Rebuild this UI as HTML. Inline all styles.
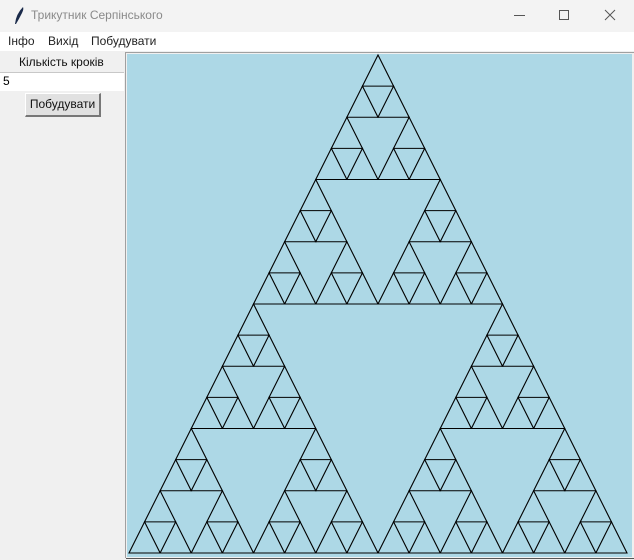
<!DOCTYPE html>
<html><head><meta charset="utf-8"><style>
body{margin:0;width:634px;height:560px;overflow:hidden;background:#f0f0f0;font-family:"Segoe UI","Liberation Sans",sans-serif;position:relative}
.t{position:absolute;left:0;top:0;width:634px;height:32px;background:#f3f3f3}
.tt{position:absolute;left:31px;top:8px;font-size:12px;color:#8a8a8a}
.m{position:absolute;left:0;top:32px;width:634px;height:19px;background:#fff;font-size:12px;color:#222}
.m span{position:absolute;top:2px}
svg{position:absolute;left:0;top:0}
</style></head><body>
<div class="t"><svg width="24" height="32" style="left:8px"><path d="M7 24 Q8 14 15 7 Q16 9 14 13 Q11 19 8 24 Z" fill="#1a2a4a"/></svg>
<div class="tt">Трикутник Серпінського</div>
<svg width="634" height="32"><line x1="514" y1="15.5" x2="525" y2="15.5" stroke="#555"/><rect x="559.5" y="10.5" width="9" height="9" fill="none" stroke="#555"/><path d="M605 10 L615 20 M615 10 L605 20" stroke="#555"/></svg></div>
<div class="m"><span style="left:8px">Інфо</span><span style="left:48px">Вихід</span><span style="left:91px">Побудувати</span></div>
<div style="position:absolute;left:19px;top:55px;font-size:12px;color:#111">Кількість кроків</div>
<div style="position:absolute;left:0;top:72px;width:124px;height:18px;background:#fff;border-top:1px solid #c8c8c8"><span style="position:absolute;left:3px;top:1px;font-size:12px">5</span></div>
<div style="position:absolute;left:25px;top:93px;width:73px;height:21px;background:#e1e1e1;border:1px solid #fff;border-right:2px solid #777;border-bottom:2px solid #777;font-size:12px;text-align:center;line-height:21px;color:#111">Побудувати</div>
<svg width="634" height="560"><rect x="125" y="51" width="509" height="509" fill="#f0f0f0"/><line x1="125.5" y1="52" x2="125.5" y2="558" stroke="#a0a0a0"/><line x1="125" y1="52.5" x2="634" y2="52.5" stroke="#a0a0a0"/><line x1="126" y1="558.5" x2="634" y2="558.5" stroke="#555"/><rect x="127" y="54" width="505" height="503" fill="#add8e6"/><g id="g" stroke="#000" stroke-width="1.1" fill="none"></g></svg>
<script>
var g=document.getElementById('g'),s='';
function t(ax,ay,bx,by,cx,cy,n){if(n==0){s+='<polygon points="'+ax+','+ay+' '+bx+','+by+' '+cx+','+cy+'"/>';return;}
var abx=(ax+bx)/2,aby=(ay+by)/2,bcx=(bx+cx)/2,bcy=(by+cy)/2,acx=(ax+cx)/2,acy=(ay+cy)/2;
t(ax,ay,abx,aby,acx,acy,n-1);t(abx,aby,bx,by,bcx,bcy,n-1);t(acx,acy,bcx,bcy,cx,cy,n-1);}
t(378,55,129,553,627,553,4);g.innerHTML=s;
</script>
</body></html>
